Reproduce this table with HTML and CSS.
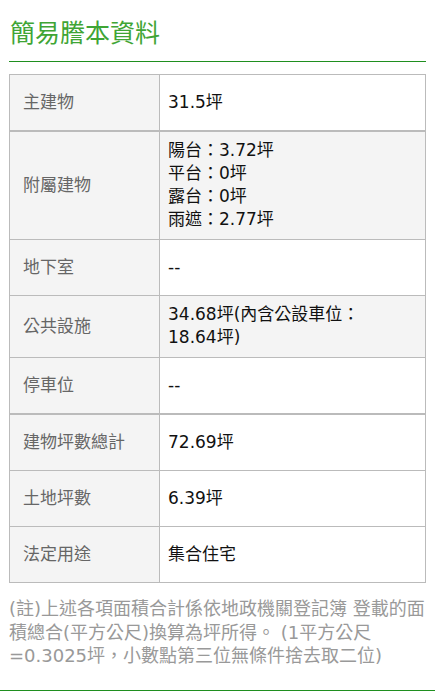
FILE: index.html
```html
<!DOCTYPE html>
<html lang="zh-Hant">

<head>
    <meta charset="UTF-8">
    <meta name="viewport" content="width=device-width, initial-scale=1.0">
    <title>簡易謄本資料</title>
    <link rel="stylesheet" href="styles.css">
</head>

<body>

    <div class="section">
        <h2 class="section-title">簡易謄本資料</h2>

        <table class="info-table">
            <tr>
                <th>主建物</th>
                <td>31.5坪</td>
            </tr>
            <tr class="thick alt">
                <th>附屬建物</th>
                <td>陽台：3.72坪<br>平台：0坪<br>露台：0坪<br>雨遮：2.77坪</td>
            </tr>
            <tr>
                <th>地下室</th>
                <td>--</td>
            </tr>
            <tr class="alt">
                <th>公共設施</th>
                <td>34.68坪(內含公設車位：<span class="nowrap">18.64坪)</span></td>
            </tr>
            <tr>
                <th>停車位</th>
                <td>--</td>
            </tr>
            <tr class="thick">
                <th>建物坪數總計</th>
                <td>72.69坪</td>
            </tr>
            <tr>
                <th>土地坪數</th>
                <td>6.39坪</td>
            </tr>
            <tr>
                <th>法定用途</th>
                <td>集合住宅</td>
            </tr>
        </table>

        <p class="note">(註)上述各項面積合計係依地政機關登記簿 登載的面積總合(平方公尺)換算為坪所得。 (1平方公尺=0.3025坪，小數點第三位無條件捨去取二位)</p>
    </div>

    <div class="next-section"></div>

</body>

</html>
```

FILE: styles.css
```css
body {
    font-family: "DejaVu Sans", "Noto Sans CJK TC", sans-serif;
    background-color: #fff;
    margin: 0;
    padding: 0;
}

.section {
    padding: 0 9px 0 9px;
    height: 690px;
}

.section-title {
    margin: 0;
    padding: 14px 0 13px 1px;
    font-size: 25px;
    line-height: 34px;
    font-weight: normal;
    color: #3fa535;
    border-bottom: 1px solid #1f8f1f;
    font-family: "Noto Sans CJK TC", sans-serif;
}

.info-table {
    width: 100%;
    margin-top: 12px;
    border-collapse: collapse;
    font-size: 17px;
    line-height: 23px;
}

.info-table th,
.info-table td {
    border: 1px solid #bbb;
    height: 40px;
    padding: 7px 8px 8px 8px;
    vertical-align: middle;
    text-align: left;
}

.info-table th {
    width: 128px;
    padding-left: 13px;
    font-weight: normal;
    color: #666;
    background-color: #f4f4f4;
}

.info-table td {
    color: #111;
    background-color: #fff;
}

.info-table tr.alt td {
    background-color: #f4f4f4;
}

.info-table tr.thick th,
.info-table tr.thick td {
    border-top: 2px solid #bbb;
}

.nowrap {
    white-space: nowrap;
}

.note {
    margin: 14px 0 0 0;
    font-size: 18px;
    line-height: 23.5px;
    color: #999;
}

.next-section {
    border-top: 1px solid #1f8f1f;
    height: 20px;
}
```
